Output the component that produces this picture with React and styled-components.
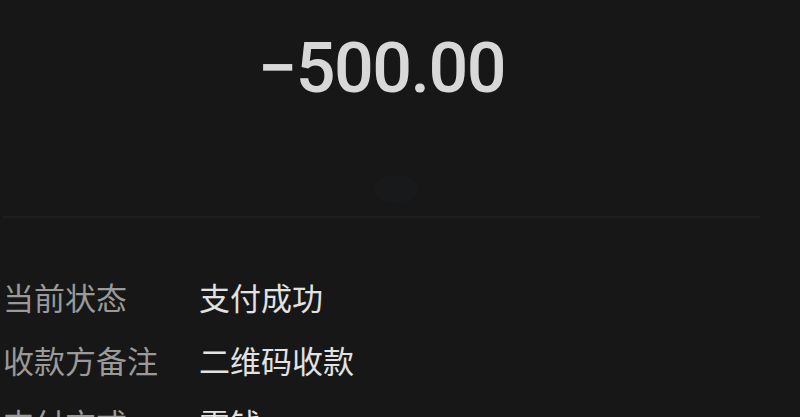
import React from "react";
import styled, { createGlobalStyle } from "styled-components";

const GlobalStyle = createGlobalStyle`
  html, body {
    margin: 0;
    padding: 0;
    background: #171717;
    overflow: hidden;
  }
  body {
    font-family: "Noto Sans CJK SC", "Noto Sans", sans-serif;
  }
`;

// layout

const Page = styled.div`
  width: 800px;
  height: 417px;
  background: #171717;
  overflow: hidden;
`;

const Content = styled.div`
  width: 757px;
  margin-left: 3px;
`;

const Header = styled.div`
  height: 216px;
  display: flex;
  flex-direction: column;
  align-items: center;
  padding-top: 33px;
  box-sizing: border-box;
`;

const Amount = styled.div`
  font-family: Roboto, "Liberation Sans", sans-serif;
  font-size: 70px;
  font-weight: 500;
  line-height: 70px;
  color: #d8d8d8;
  letter-spacing: -1.5px;
`;

const Mark = styled.div`
  margin-top: 72px;
  width: 44px;
  height: 28px;
  border-radius: 50%;
  background: #18191b;
  transform: translateX(14px);
`;

const Divider = styled.div`
  height: 2px;
  background: #1e1e1e;
`;

const List = styled.div`
  padding-top: 47px;
`;

const Row = styled.div`
  display: flex;
  height: 63px;
  align-items: center;
  font-size: 31px;
  line-height: 63px;
`;

const Label = styled.span`
  width: 196px;
  color: #9a9a9a;
`;

const Value = styled.span`
  color: #e2e2e2;
`;

//

const rows = [
  ["当前状态", "支付成功"],
  ["收款方备注", "二维码收款"],
  ["支付方式", "零钱"],
];

export default function App() {
  return (
    <Page>
      <GlobalStyle />
      <Content>
        <Header>
          <Amount>−500.00</Amount>
          <Mark />
        </Header>
        <Divider />
        <List>
          {rows.map(([label, value]) => (
            <Row key={label}>
              <Label>{label}</Label>
              <Value>{value}</Value>
            </Row>
          ))}
        </List>
      </Content>
    </Page>
  );
}
